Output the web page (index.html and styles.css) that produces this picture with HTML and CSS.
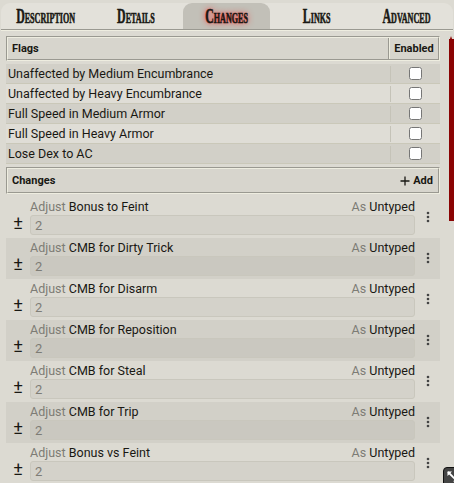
FILE: index.html
```html
<!DOCTYPE html>
<html lang="en">
<head>
<meta charset="utf-8">
<title>Item Sheet - Changes</title>
<link rel="stylesheet" href="styles.css">
</head>
<body>
<div class="sheet">
  <nav class="tabs">
    <a class="tab"><span class="tab-label">Description</span></a>
    <a class="tab"><span class="tab-label">Details</span></a>
    <a class="tab active"><span class="tab-label">Changes</span></a>
    <a class="tab"><span class="tab-label">Links</span></a>
    <a class="tab"><span class="tab-label">Advanced</span></a>
  </nav>

  <section class="sheet-body">
    <div class="list-header">
      <span class="h-name">Flags</span>
      <span class="h-col">Enabled</span>
    </div>
    <ol class="flag-list">
      <li class="flag-row"><span class="flag-name">Unaffected by Medium Encumbrance</span><span class="flag-col"><input type="checkbox"></span></li>
      <li class="flag-row"><span class="flag-name">Unaffected by Heavy Encumbrance</span><span class="flag-col"><input type="checkbox"></span></li>
      <li class="flag-row"><span class="flag-name">Full Speed in Medium Armor</span><span class="flag-col"><input type="checkbox"></span></li>
      <li class="flag-row"><span class="flag-name">Full Speed in Heavy Armor</span><span class="flag-col"><input type="checkbox"></span></li>
      <li class="flag-row"><span class="flag-name">Lose Dex to AC</span><span class="flag-col"><input type="checkbox"></span></li>
    </ol>

    <div class="list-header changes-header">
      <span class="h-name">Changes</span>
      <a class="add-btn"><svg class="plus" width="10" height="10" viewBox="0 0 10 10"><path d="M5 0.5V9.5M0.5 5H9.5" stroke="#191813" stroke-width="1.3" fill="none"/></svg>Add</a>
    </div>
    <ol class="change-list">
      <li class="change">
        <span class="pm">±</span>
        <div class="change-main">
          <div class="change-line"><span><span class="muted">Adjust</span> Bonus to Feint</span><span><span class="muted">As</span> Untyped</span></div>
          <div class="formula">2</div>
        </div>
        <span class="kebab"><svg width="4" height="12" viewBox="0 0 4 12"><circle cx="2" cy="2" r="1.3"/><circle cx="2" cy="6" r="1.3"/><circle cx="2" cy="10" r="1.3"/></svg></span>
      </li>
      <li class="change">
        <span class="pm">±</span>
        <div class="change-main">
          <div class="change-line"><span><span class="muted">Adjust</span> CMB for Dirty Trick</span><span><span class="muted">As</span> Untyped</span></div>
          <div class="formula">2</div>
        </div>
        <span class="kebab"><svg width="4" height="12" viewBox="0 0 4 12"><circle cx="2" cy="2" r="1.3"/><circle cx="2" cy="6" r="1.3"/><circle cx="2" cy="10" r="1.3"/></svg></span>
      </li>
      <li class="change">
        <span class="pm">±</span>
        <div class="change-main">
          <div class="change-line"><span><span class="muted">Adjust</span> CMB for Disarm</span><span><span class="muted">As</span> Untyped</span></div>
          <div class="formula">2</div>
        </div>
        <span class="kebab"><svg width="4" height="12" viewBox="0 0 4 12"><circle cx="2" cy="2" r="1.3"/><circle cx="2" cy="6" r="1.3"/><circle cx="2" cy="10" r="1.3"/></svg></span>
      </li>
      <li class="change">
        <span class="pm">±</span>
        <div class="change-main">
          <div class="change-line"><span><span class="muted">Adjust</span> CMB for Reposition</span><span><span class="muted">As</span> Untyped</span></div>
          <div class="formula">2</div>
        </div>
        <span class="kebab"><svg width="4" height="12" viewBox="0 0 4 12"><circle cx="2" cy="2" r="1.3"/><circle cx="2" cy="6" r="1.3"/><circle cx="2" cy="10" r="1.3"/></svg></span>
      </li>
      <li class="change">
        <span class="pm">±</span>
        <div class="change-main">
          <div class="change-line"><span><span class="muted">Adjust</span> CMB for Steal</span><span><span class="muted">As</span> Untyped</span></div>
          <div class="formula">2</div>
        </div>
        <span class="kebab"><svg width="4" height="12" viewBox="0 0 4 12"><circle cx="2" cy="2" r="1.3"/><circle cx="2" cy="6" r="1.3"/><circle cx="2" cy="10" r="1.3"/></svg></span>
      </li>
      <li class="change">
        <span class="pm">±</span>
        <div class="change-main">
          <div class="change-line"><span><span class="muted">Adjust</span> CMB for Trip</span><span><span class="muted">As</span> Untyped</span></div>
          <div class="formula">2</div>
        </div>
        <span class="kebab"><svg width="4" height="12" viewBox="0 0 4 12"><circle cx="2" cy="2" r="1.3"/><circle cx="2" cy="6" r="1.3"/><circle cx="2" cy="10" r="1.3"/></svg></span>
      </li>
      <li class="change">
        <span class="pm">±</span>
        <div class="change-main">
          <div class="change-line"><span><span class="muted">Adjust</span> Bonus vs Feint</span><span><span class="muted">As</span> Untyped</span></div>
          <div class="formula">2</div>
        </div>
        <span class="kebab"><svg width="4" height="12" viewBox="0 0 4 12"><circle cx="2" cy="2" r="1.3"/><circle cx="2" cy="6" r="1.3"/><circle cx="2" cy="10" r="1.3"/></svg></span>
      </li>
    </ol>
  </section>

  <div class="scroll-thumb"></div>
  <div class="resize-handle"><svg width="11" height="11" viewBox="0 0 11 11"><path d="M1 1L10 10" stroke="#fff" stroke-width="1.8"/><path d="M0.5 0.5H5L0.5 5Z M10.5 10.5H6L10.5 6Z" fill="#fff"/></svg></div>
</div>
</body>
</html>
```

FILE: styles.css
```css
* { box-sizing: border-box; }

html, body {
  margin: 0;
  padding: 0;
  width: 454px;
  height: 483px;
  overflow: hidden;
  background: #d9d7cf;
}

.sheet {
  position: relative;
  width: 454px;
  height: 483px;
  overflow: hidden;
  background: #dcdad2;
  font-family: Roboto, "Liberation Sans", sans-serif;
  font-size: 12.5px;
  color: #191813;
}

/* Tabs */
.tabs {
  display: flex;
  margin: 3px 1px 0 1px;
  height: 28px;
  background: #e3e1da;
  border-radius: 9px 9px 0 0;
  border-bottom: 2px groove #eeede0;
  padding: 0 1px 0 0;
}

.tab {
  flex: 1 1 0;
  min-width: 0;
  display: flex;
  align-items: center;
  justify-content: center;
  margin: 0 2px;
  border-radius: 9px 9px 0 0;
  color: #191813;
  text-decoration: none;
}

.tab.active {
  background: #c2c0b8;
  text-shadow: 0 0 8px #ff2020, 0 0 3px #ff6060;
}

.tab-label {
  display: inline-block;
  flex: none;
  font-family: "Liberation Serif", serif;
  font-weight: bold;
  font-variant: small-caps;
  font-size: 22px;
  line-height: 24px;
  transform: scaleX(0.54);
  -webkit-text-stroke: 0.6px #191813;
  white-space: nowrap;
}

/* Body */
.sheet-body {
  padding: 5px 14px 0 6px;
}

.list-header {
  display: flex;
  align-items: stretch;
  height: 25px;
  border: 2px groove #eeede0;
  background: rgba(0, 0, 0, 0.02);
  font-size: 11px;
  font-weight: bold;
}

.h-name {
  flex: 1;
  display: flex;
  align-items: center;
  padding-left: 4px;
}

.h-col {
  width: 50px;
  display: flex;
  align-items: center;
  justify-content: center;
  border-left: 2px groove #eeede0;
}

.flag-list, .change-list {
  list-style: none;
  margin: 3px 0 0 0;
  padding: 0;
}

.flag-row {
  display: flex;
  align-items: center;
  height: 20px;
  border-bottom: 1px solid #cac8b9;
}

.flag-row:nth-child(odd) {
  background: #d2d0c8;
}

.flag-row:nth-child(even) {
  background: #dfddd6;
}

.flag-name {
  flex: 1;
  padding-left: 2px;
  white-space: nowrap;
}

.flag-col {
  width: 50px;
  height: 16px;
  display: flex;
  align-items: center;
  justify-content: center;
  border-left: 1px solid #c5c3b8;
}

.flag-col input {
  margin: 0;
  width: 13px;
  height: 13px;
}

.changes-header {
  margin-top: 3px;
  height: 27px;
}

.add-btn {
  display: flex;
  align-items: center;
  gap: 3px;
  padding-right: 5px;
  font-size: 11px;
  font-weight: bold;
  color: #191813;
}

.plus { display: block; }

/* Changes */
.change {
  display: flex;
  height: 41px;
}

.change:nth-child(even) {
  background: #d2d0c8;
}

.pm {
  width: 24px;
  display: flex;
  align-items: flex-end;
  justify-content: center;
  padding-bottom: 6px;
  font-size: 18px;
  line-height: 18px;
}

.change-main {
  flex: 1;
  display: flex;
  flex-direction: column;
}

.change-line {
  height: 18px;
  display: flex;
  justify-content: space-between;
  align-items: center;
  font-size: 12.5px;
  white-space: nowrap;
}

.muted {
  color: #7d7c75;
}

.formula {
  height: 20px;
  border: 1px solid #c9c7bd;
  border-radius: 3px;
  background: rgba(0, 0, 0, 0.035);
  padding-left: 4px;
  display: flex;
  align-items: center;
  color: #7d7c75;
  font-size: 13px;
}

.kebab {
  width: 25px;
  display: flex;
  justify-content: center;
  padding-top: 14px;
}

.kebab svg {
  fill: #444;
  display: block;
}

/* Overlays */
.scroll-thumb {
  position: absolute;
  right: 0;
  top: 39px;
  width: 5px;
  height: 182px;
  background: #8a0303;
}

.scroll-thumb::before {
  content: "";
  position: absolute;
  top: -3px;
  left: 1px;
  border-left: 1.5px solid transparent;
  border-right: 1.5px solid transparent;
  border-bottom: 3px solid #8a0303;
}

.resize-handle {
  position: absolute;
  right: -5px;
  bottom: -1px;
  width: 16px;
  height: 17px;
  padding: 3px 2px 2px 3px;
  background: #444;
  border: 1px solid #111;
  border-radius: 4px 0 0 0;
}

.resize-handle svg { display: block; }
```
